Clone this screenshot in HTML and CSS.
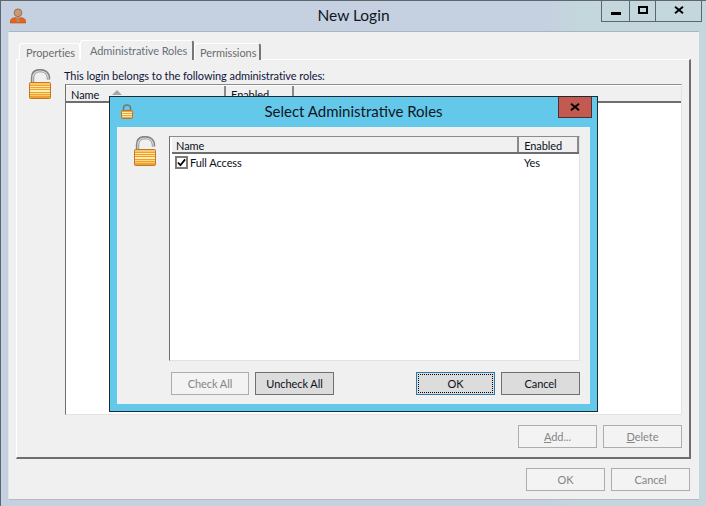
FILE: index.html
```html
<!DOCTYPE html>
<html lang="en">
<head>
<meta charset="utf-8">
<title>New Login</title>
<link rel="stylesheet" href="styles.css">
</head>
<body>
<svg class="defs" width="0" height="0" aria-hidden="true">
  <defs>
    <symbol id="lock" viewBox="0 0 22 30">
      <path d="M3.500 15V9C3.500 4 6.500 1.500 11 1.500S19.500 4 19.500 9V10.500" fill="none" stroke="#858585" stroke-width="3.400"/>
      <path d="M3.800 13V9C3.800 4.500 6.800 2 11 2S19.200 4.500 19.200 9V10" fill="none" stroke="#d8d8d8" stroke-width="1.200"/>
      <rect x=".5" y="13.500" width="21" height="16" rx="1" fill="#f0a030" stroke="#c1772a"/>
      <rect x="1" y="14" width="20" height="2" fill="#f7c768"/>
      <rect x="1" y="17" width="20" height="1" fill="#ffe9a6"/>
      <rect x="1" y="19" width="20" height="1" fill="#ffe296"/>
      <rect x="1" y="21" width="20" height="2" fill="#ffedb0"/>
      <rect x="1" y="24" width="20" height="1" fill="#ffdc88"/>
      <rect x="1" y="26" width="20" height="1" fill="#fbcb6c"/>
    </symbol>
    <symbol id="closedlock" viewBox="0 0 12 15">
      <path d="M2.500 7V4C2.500 2 4 1 6 1S9.500 2 9.500 4V7" fill="none" stroke="#777" stroke-width="1.600"/>
      <rect x=".5" y="6.500" width="11" height="8" rx="1" fill="#f0a636" stroke="#b9762a"/>
      <rect x="1" y="8" width="10" height="1" fill="#ffedb0"/>
      <rect x="1" y="10" width="10" height="1" fill="#fff3c6"/>
      <rect x="1" y="12" width="10" height="1" fill="#ffe296"/>
    </symbol>
    <symbol id="x" viewBox="0 0 12 10">
      <path d="M1 1L11 9M11 1L1 9" fill="none" stroke="#000" stroke-width="2.400"/>
    </symbol>
  </defs>
</svg>

<div class="window">
  <header class="titlebar">
    <svg class="user-icon" viewBox="0 0 16 16" width="16" height="16" aria-hidden="true">
      <path d="M0 15C0 11 2 10 5.500 9.500L8 11L10.500 9.500C14 10 16 11 16 15Z" fill="#e8641a" stroke="#a9430f" stroke-width=".5"/>
      <circle cx="8" cy="4.800" r="3.900" fill="#c79a72" stroke="#7e5a3e" stroke-width=".7"/>
      <path d="M7 9H9L9.500 14H6.500Z" fill="#b98a63"/>
    </svg>
    <h1 class="title">New Login</h1>
    <div class="caption-buttons">
      <span class="cap cap-min"><i class="glyph-min"></i></span>
      <span class="cap cap-max"><i class="glyph-max"></i></span>
      <span class="cap cap-close"><svg width="10" height="8"><use href="#x"/></svg></span>
    </div>
  </header>

  <div class="client">
    <div class="tabs">
      <span class="tab tab-first">Properties</span>
      <span class="tab tab-active">Administrative Roles</span>
      <span class="tab tab-last">Permissions</span>
    </div>
    <section class="panel">
      <svg class="lock-big" width="22" height="30"><use href="#lock"/></svg>
      <div class="panel-main">
        <p class="panel-label">This login belongs to the following administrative roles:</p>
        <div class="outer-list">
          <div class="outer-head">
            <span class="oh oh-name">Name<i class="sort"></i></span>
            <span class="oh oh-enabled">Enabled</span>
            <span class="oh oh-rest"></span>
          </div>
        </div>
        <div class="button-row button-row-end">
          <button class="btn" disabled><u>A</u>dd...</button>
          <button class="btn" disabled><u>D</u>elete</button>
        </div>
      </div>
    </section>
    <div class="button-row button-row-end window-actions">
      <button class="btn" disabled>OK</button>
      <button class="btn" disabled>Cancel</button>
    </div>
  </div>

  <div class="dialog">
    <header class="dialog-bar">
      <svg class="lock-small" width="12" height="15"><use href="#closedlock"/></svg>
      <h2 class="dialog-title">Select Administrative Roles</h2>
      <span class="dialog-close"><svg width="10" height="8"><use href="#x"/></svg></span>
    </header>
    <div class="dialog-client">
      <svg class="lock-dialog" width="22" height="30"><use href="#lock"/></svg>
      <div class="dialog-main">
        <div class="role-list">
          <div class="role-head">
            <span class="rh rh-name">Name</span>
            <span class="rh rh-enabled">Enabled</span>
          </div>
          <div class="role-row">
            <span class="role-name">
              <span class="checkbox"><svg width="10" height="9" viewBox="0 0 10 9"><path d="M1 4.500L3.800 7.500L9 1" fill="none" stroke="#000" stroke-width="2"/></svg></span>
              Full Access
            </span>
            <span class="role-enabled">Yes</span>
          </div>
        </div>
        <div class="dialog-buttons">
          <div class="button-group">
            <button class="btn" disabled>Check All</button>
            <button class="btn btn-on">Uncheck All</button>
          </div>
          <div class="button-group">
            <button class="btn btn-on btn-focus"><span class="focus-ring">OK</span></button>
            <button class="btn btn-on">Cancel</button>
          </div>
        </div>
      </div>
    </div>
  </div>
</div>
</body>
</html>
```

FILE: styles.css
```css
* { box-sizing: border-box; }
html, body { margin: 0; padding: 0; }
body {
  width: 706px;
  height: 506px;
  overflow: hidden;
  font-family: "Lato", "Open Sans", sans-serif;
  font-size: 11px;
  letter-spacing: -0.07px;
  color: #0c1020;
}
.defs { position: absolute; }
.window {
  position: relative;
  width: 706px;
  height: 506px;
  display: flex;
  flex-direction: column;
  background: linear-gradient(90deg, #c5d1e0 0, #c5d1e0 78%, #c4d7dc 82%, #c4d7dc 100%);
  border-top: 1px solid #5f6670;
  border-left: 1px solid #5f6670;
}
.titlebar {
  position: relative;
  height: 30px;
  flex: none;
  display: flex;
  justify-content: center;
  align-items: flex-start;
}
.user-icon { position: absolute; left: 9px; top: 7px; }
.title {
  margin: 4px 0 0;
  font-size: 15.500px;
  font-weight: 400;
  line-height: 20px;
  letter-spacing: 0;
  color: #101522;
}
.caption-buttons {
  position: absolute;
  right: 4px;
  top: 0;
  display: flex;
  height: 21px;
  border: 1px solid #5b6670;
  border-top: 0;
}
.cap {
  display: flex;
  align-items: center;
  justify-content: center;
  height: 100%;
  border-right: 1px solid #5b6670;
}
.cap-min { width: 28px; }
.cap-max { width: 26px; }
.cap-close { width: 45px; border-right: 0; }
.glyph-min { width: 10px; height: 3px; background: #000; margin-top: 5px; }
.glyph-max { width: 10px; height: 8px; border: 2px solid #000; margin-top: -3px; }
.cap-close svg { margin-top: -3px; }

.client {
  flex: none;
  margin-left: 7px;
  width: 691px;
  height: 469px;
  background: #f0f0f0;
  border-top: 1px solid #a9b5bf;
  border-left: 1px solid #dfe6ea;
  border-bottom: 1px solid #aebcc2;
  padding: 8px 8px 0 7px;
}
.tabs {
  display: flex;
  align-items: flex-end;
  height: 20px;
  padding-left: 3px;
  position: relative;
  z-index: 1;
  margin-bottom: -1px;
}
.tab {
  display: block;
  height: 17px;
  line-height: 17px;
  padding: 0 0 0 6px;
  white-space: nowrap;
  color: #6c6c6c;
  background: #f0f0f0;
  border: 1px solid #fff;
  border-bottom: 0;
  border-radius: 3px 3px 0 0;
}
.tab-first { width: 61px; }
.tab-active {
  width: 114px;
  height: 20px;
  padding-left: 9px;
  line-height: 19px;
  border-right: 2px solid #777;
  color: #67707a;
}
.tab-last { width: 67px; border-right: 2px solid #777; padding-left: 5px; }

.panel {
  width: 675px;
  height: 400px;
  display: flex;
  border-left: 1px solid #fff;
  border-top: 1px solid #fff;
  border-right: 2px solid #6e6e6e;
  border-bottom: 2px solid #6e6e6e;
  padding: 8px 0 0 12px;
}
.lock-big { flex: none; margin-right: 13px; margin-top: 1px; }
.panel-main { width: 618px; }
.panel-label { margin: 0; height: 16px; line-height: 15px; color: #10153a; }
.outer-list {
  width: 617px;
  height: 331px;
  margin-left: 1px;
  background: #fff;
  border-left: 1px solid #6f6f6f;
  border-top: 1px solid #8c8c8c;
  border-right: 1px solid #e2e2e2;
  border-bottom: 1px solid #e2e2e2;
}
.outer-head {
  display: flex;
  height: 18px;
  background: #f0f0f0;
  border-top: 1px solid #fff;
  border-bottom: 2px solid #6e6e6e;
}
.oh { display: block; height: 16px; line-height: 17px; padding-left: 5px; border-right: 2px solid #8a8a8a; }
.oh-name { position: relative; width: 160px; }
.oh-enabled { width: 68px; }
.oh-rest { flex: 1; border-right: 0; }
.sort {
  position: absolute;
  left: 46px;
  top: 4px;
  width: 0;
  height: 0;
  border-left: 5px solid transparent;
  border-right: 5px solid transparent;
  border-bottom: 5px solid #a8a8a8;
}

.button-row { display: flex; gap: 6px; }
.button-row-end { justify-content: flex-end; }
.panel-main .button-row { margin-top: 10px; }
.window-actions { margin-top: 9px; margin-right: 1px; }
.btn {
  width: 79px;
  height: 23px;
  padding: 0;
  font-family: inherit;
  font-size: 11px;
  letter-spacing: inherit;
  background: #dcdcdc;
  border: 1px solid #707070;
  border-radius: 0;
  color: #0c1020;
}
.btn:disabled { background: #f3f3f3; border-color: #adadad; color: #858585; }
.btn-focus { border-color: #2a7ab0; padding: 1px; }
.focus-ring {
  display: flex;
  align-items: center;
  justify-content: center;
  height: 100%;
  border: 1px dotted #000;
}

.dialog {
  position: absolute;
  left: 108px;
  top: 95px;
  width: 489px;
  height: 316px;
  display: flex;
  flex-direction: column;
  background: #63c8ea;
  border: 1px solid #1c2b36;
  padding: 0 7px 7px;
}
.dialog-bar {
  position: relative;
  flex: none;
  height: 30px;
  display: flex;
  justify-content: center;
}
.lock-small { position: absolute; left: 4px; top: 7px; }
.dialog-title {
  margin: 4px 0 0;
  font-size: 15px;
  font-weight: 400;
  line-height: 20px;
  letter-spacing: 0;
  color: #101522;
}
.dialog-close {
  position: absolute;
  right: -2px;
  top: 0;
  width: 34px;
  height: 21px;
  display: flex;
  align-items: center;
  justify-content: center;
  background: #c25a50;
  border: 1px solid #4b3036;
  border-top: 0;
}
.dialog-client {
  flex: 1;
  display: flex;
  background: #f0f0f0;
  padding: 9px 10px 0 17px;
}
.lock-dialog { flex: none; margin-right: 13px; }
.dialog-main { width: 411px; }
.role-list {
  width: 411px;
  height: 225px;
  background: #fff;
  border-left: 1px solid #6f6f6f;
  border-top: 1px solid #8c8c8c;
  border-right: 1px solid #e2e2e2;
  border-bottom: 1px solid #e2e2e2;
}
.role-head {
  display: flex;
  height: 17px;
  background: #f0f0f0;
  margin-left: 2px;
  border-bottom: 2px solid #6e6e6e;
}
.rh { display: block; height: 15px; line-height: 18px; }
.rh-name { width: 348px; padding-left: 4px; border-right: 2px solid #8a8a8a; }
.rh-enabled { width: 60px; padding-left: 5px; border-right: 2px solid #8a8a8a; }
.role-row { display: flex; height: 18px; align-items: center; padding-left: 5px; margin-top: -1px; }
.role-name { width: 349px; display: flex; align-items: center; gap: 2px; }
.role-enabled { padding-left: 0; }
.checkbox {
  width: 13px;
  height: 13px;
  display: flex;
  align-items: center;
  justify-content: center;
  background: #fff;
  border: 2px solid #7a7a7a;
}
.dialog-buttons {
  display: flex;
  justify-content: space-between;
  margin-top: 11px;
  padding-left: 2px;
}
.button-group { display: flex; gap: 6px; }
.button-group .btn:first-child { width: 78px; }
.button-group .btn:last-child { width: 79px; }
.button-group .btn-focus { width: 79px !important; }
```
